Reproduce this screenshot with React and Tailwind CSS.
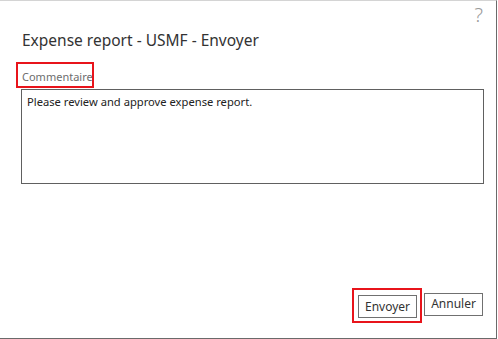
import React from 'react';

const font = { fontFamily: '"Noto Sans", "Open Sans", Arial, sans-serif' };

const Highlight = ({ className }) => (
  <span className={`absolute border-2 border-[#e8141b] pointer-events-none ${className}`} />
);

export default function App() {
  return (
    <div className="w-[498px] h-[339px] bg-white" style={font}>
      <div className="w-[497px] h-[339px] flex flex-col border-t border-t-[#d4d4d4] border-r border-r-[#6a6a6a] border-b border-b-[#6a6a6a]">
        <div className="flex justify-end h-[24px] pr-[13px] pt-[3px]">
          <span className="text-[20px] leading-[22px] font-light text-[#9a9a9a]">?</span>
        </div>

        <h1 className="mt-[4px] ml-[22px] text-[15.5px] leading-[22px] text-[#333]">
          Expense report - USMF - Envoyer
        </h1>

        <div className="mt-[18px] ml-[22px] relative self-start">
          <span className="block text-[11px] leading-[16px] text-[#6d6d6d]">Commentaire</span>
          <Highlight className="-left-[6px] -top-[7px] w-[78px] h-[26px]" />
        </div>

        <div className="mt-[4px] ml-[21px] w-[463px] h-[95px] border border-[#606060] px-[5px] py-[3px]">
          <p className="text-[11.2px] leading-[17px] text-[#222]">
            Please review and approve expense report.
          </p>
        </div>

        <div className="flex-1" />

        <div className="flex justify-end gap-[7px] pr-[13px] pb-[20px]">
          <div className="relative">
            <button className="w-[59px] h-[23px] border border-[#707070] bg-white text-[12px] text-[#333] leading-none">
              Envoyer
            </button>
            <Highlight className="-left-[6px] -top-[5px] w-[70px] h-[35px]" />
          </div>
          <button className="w-[59px] h-[23px] border border-[#707070] bg-white text-[12px] text-[#333] leading-none">
            Annuler
          </button>
        </div>
      </div>
    </div>
  );
}
